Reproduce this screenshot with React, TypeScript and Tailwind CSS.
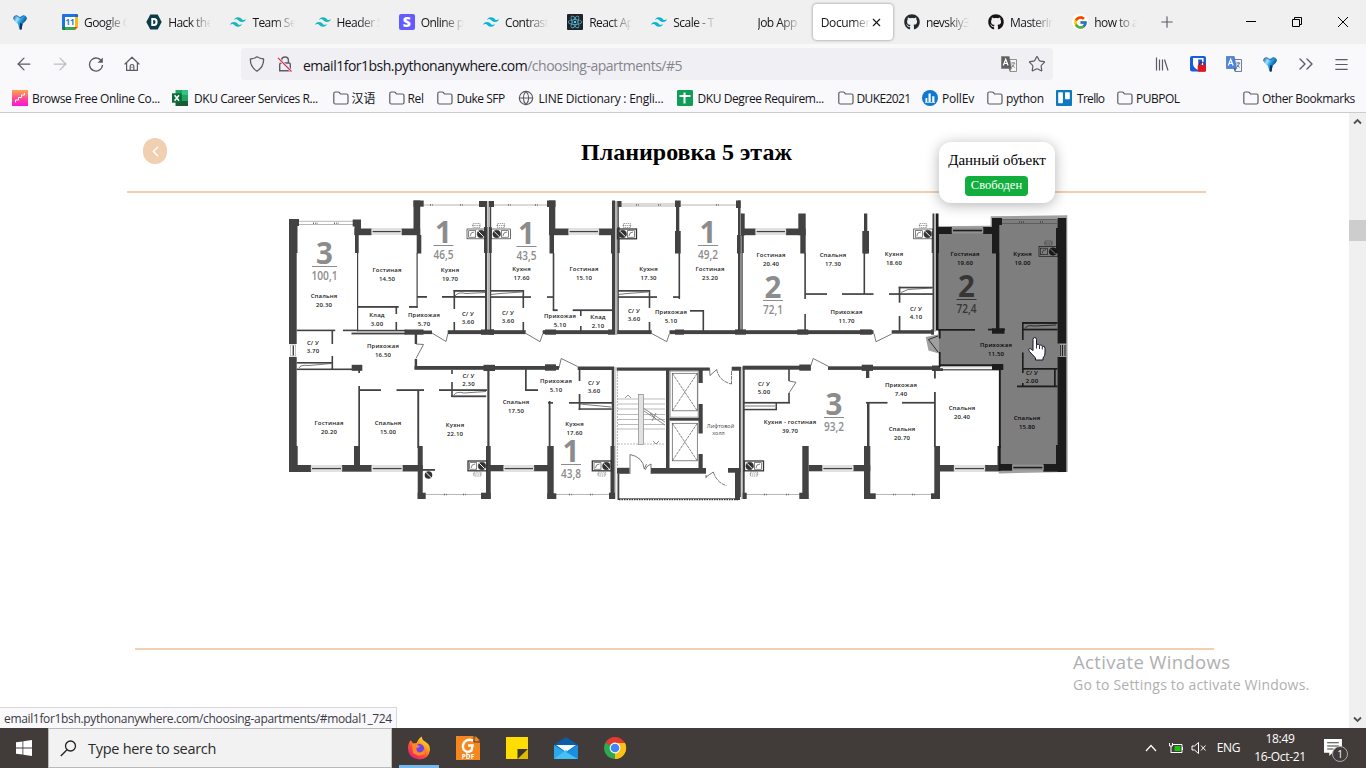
import React from "react";
import { SiTailwindcss, SiReact } from "react-icons/si";
import { FaGithub } from "react-icons/fa";
import { FcGoogle } from "react-icons/fc";
import { ArrowLeft, ArrowRight, Star, Menu, ChevronsRight, ChevronLeft, Globe, X, Plus } from "lucide-react";

type Box = [number, number, number, number];

const WALL = "#424242";

/* ---------- browser icons ---------- */

function Gem() {
  return (
    <svg viewBox="0 0 16 16" className="h-4 w-4">
      <defs>
        <linearGradient id="gem" x1="0" y1="0" x2="1" y2="0.6">
          <stop offset="0" stopColor="#0a3f80" />
          <stop offset="0.35" stopColor="#a5e4ff" />
          <stop offset="0.55" stopColor="#2ba4ea" />
          <stop offset="1" stopColor="#062f60" />
        </linearGradient>
      </defs>
      <path d="M1 4.500Q2 1 4.500 1.200L8 2.500 11.500 1.200Q14 1 15 4.500 14 7.500 10.500 10L9.500 15.500H7.500L6 10Q2 7.500 1 4.500Z" fill="url(#gem)" />
      <path d="M4.500 1.500 8 4 11.500 1.500" stroke="#0c5da8" strokeWidth="0.8" fill="none" />
      <path d="M8 9v6.500h1.500l1-5.500z" fill="#06335f" />
    </svg>
  );
}

function Calendar() {
  return (
    <svg viewBox="0 0 16 16" className="h-4 w-4">
      <path d="M0 1Q0 0 1 0H13V3H3V13H0Z" fill="#1a73e8" />
      <path d="M13 0h2q1 0 1 1v2h-3z" fill="#1967d2" />
      <path d="M13 3h3v10h-3z" fill="#fbbc04" />
      <path d="M3 13h10v3H3z" fill="#34a853" />
      <path d="M0 13h3v3H1q-1 0-1-1z" fill="#188038" />
      <path d="M13 13h3l-3 3z" fill="#ea4335" />
      <path d="M3 3h10v10H3z" fill="#fff" />
      <text x="8" y="11" textAnchor="middle" fontSize="8" fontWeight="700" fontFamily="Open Sans, sans-serif" fill="#1a73e8">11</text>
    </svg>
  );
}

function HexD() {
  return (
    <svg viewBox="0 0 16 16" className="h-4 w-4">
      <path d="M4.300 .5h7.400L15.700 8l-4 7.500H4.300L.3 8z" fill="#0d3b4a" />
      <path d="M5.300 4H8q3.600.2 3.600 4T8 12H5.300zM7.200 6v4H8q1.500-.2 1.500-2T8 6z" fill="#fff" fillRule="evenodd" />
    </svg>
  );
}

function Stripe() {
  return <span className="flex h-4 w-4 items-center justify-center rounded-[2px] bg-[#635bff] font-['Open_Sans',sans-serif] text-[14px] leading-none font-extrabold text-white">S</span>;
}

function ReactLogo() {
  return (
    <span className="flex h-4 w-4 items-center justify-center rounded-[1px] bg-[#20232a]">
      <SiReact className="h-[14px] w-[14px] text-[#5cc5e0]" />
    </span>
  );
}

function GoogleG() {
  return (
    <span className="flex h-4 w-4 items-center justify-center rounded-full bg-white">
      <FcGoogle className="h-[15px] w-[15px]" />
    </span>
  );
}

function Reload() {
  return (
    <svg viewBox="0 0 16 16" className="h-4 w-4" fill="none" stroke="#5b5b66" strokeWidth="1.300">
      <path d="M14 6A6.500 6.500 0 1 0 14.500 9" />
      <path d="M14.800 1.500V6.700H9.600Z" fill="#5b5b66" stroke="none" />
    </svg>
  );
}

function Home() {
  return (
    <svg viewBox="0 0 16 16" className="h-4 w-4" fill="none" stroke="#5b5b66" strokeWidth="1.2" strokeLinejoin="round" strokeLinecap="round">
      <path d="M1 8 8 1.200 15 8M2.600 6.700V14.400H13.400V6.700M6.200 14.200V10Q6.200 8.500 8 8.500T9.800 10V14.200M8 11v.2" />
    </svg>
  );
}

function ShieldIcon() {
  return (
    <svg viewBox="0 0 16 16" className="h-4 w-4" fill="none" stroke="#5b5b66" strokeWidth="1.300" strokeLinejoin="round">
      <path d="M8 .8Q11 2.700 14.600 3 15 11 8 15.200 1 11 1.400 3 5 2.700 8 .8Z" />
    </svg>
  );
}

function LockOff() {
  return (
    <svg viewBox="0 0 16 16" className="h-4 w-4" fill="none" stroke="#5b5b66" strokeWidth="1.400">
      <path d="M4.600 7V4.500Q4.600 1 8 1T11.400 4.500V7M2.700 14.800V8.500Q2.700 7 4 7H12Q13.300 7 13.300 8.500V14.800Z" />
      <path d="M1 2 14.500 15.500" stroke="#f0f0f4" strokeWidth="2.500" />
      <path d="M1 1.800 14.500 15.500" stroke="#e22850" strokeWidth="1.200" />
    </svg>
  );
}

function Translate({ back, ink }: { back: string; ink: string }) {
  return (
    <svg viewBox="0 0 16 16" className="h-4 w-4">
      <path d="M7 3.500h8.500V15.500H9z" fill="#f4f4f4" stroke={ink} strokeWidth="0.8" />
      <path d="M10.200 7h4M12.200 6v1M13.400 7q-.4 3-3 4.500M10.800 8.500q1 2 3 3" stroke={ink} strokeWidth="0.8" fill="none" />
      <path d="M.4.5H8.200L10.500 12.500H.4z" fill={back} stroke={ink} strokeWidth="0.6" />
      <path d="M7.500 12.500h3L9 15.500z" fill={ink} />
      <path d="M2.300 9.500 4.700 3.200 7.100 9.500M3.200 7.500h3" stroke="#fff" strokeWidth="1.200" fill="none" />
    </svg>
  );
}

function Library() {
  return (
    <svg viewBox="0 0 16 16" className="h-4 w-4" stroke="#5b5b66" strokeWidth="1.200" fill="none">
      <path d="M2.500 1.500v13M5.500 3.500v11M8.500 3.500v11M10.500 3.500l3.500 11" />
    </svg>
  );
}

function Bitwarden() {
  return (
    <svg viewBox="0 0 16 16" className="h-4 w-4">
      <rect width="16" height="15.500" rx="2" fill="#175ddc" />
      <path d="M3 2h10.500v6q-.5 4-5.200 6Q3.500 12 3 8z" fill="#fff" />
      <path d="M8.200 3.500h3.800v4.500q-.5 2.500-3.800 4.200z" fill="#175ddc" />
      <path d="M9.500 9.500V8q.3-2 2.300-2t2.300 2v1.500" stroke="#901018" strokeWidth="1.200" fill="none" />
      <rect x="7.700" y="9" width="8.300" height="6.800" rx="1" fill="#e3161c" />
    </svg>
  );
}

function Folder() {
  return (
    <svg viewBox="0 0 16 16" className="h-4 w-4" fill="none" stroke="#5b5b66" strokeWidth="1.200" strokeLinejoin="round">
      <path d="M.8 12.500V3.500Q.8 2 2.300 2H5.200Q6 2 6.500 2.700L7.400 4H13.500Q15 4 15 5.500V12.500Q15 14 13.500 14H2.300Q.8 14 .8 12.500Z" />
    </svg>
  );
}

function Stairs() {
  return (
    <svg viewBox="0 0 16 16" className="h-4 w-4">
      <defs>
        <linearGradient id="st" x1="0" y1="0" x2="0" y2="1">
          <stop offset="0" stopColor="#ffa64d" />
          <stop offset="0.5" stopColor="#ff4f8b" />
          <stop offset="1" stopColor="#fb12e0" />
        </linearGradient>
      </defs>
      <path d="M0 0h16v16H0z" fill="url(#st)" />
      <path d="M3.500 12.500V10H6.500V7.500H9.500V5H12.500V3" stroke="#fff" strokeWidth="1" fill="none" />
    </svg>
  );
}

function Excel() {
  return (
    <svg viewBox="0 0 16 16" className="h-4 w-4">
      <path d="M3.500 0h6.500v5H3.500z" fill="#21a366" />
      <path d="M10 0h6v5h-6z" fill="#33c481" />
      <path d="M3.500 5h6.500v6H3.500z" fill="#107c41" />
      <path d="M10 5h6v6h-6z" fill="#21a366" />
      <path d="M3.500 11H16v5H3.500z" fill="#185c37" />
      <path d="M0 3.300h9.500v9.400H0z" fill="#0d6b38" />
      <path d="M2.600 5.200 7 10.800M7 5.200 2.600 10.800" stroke="#fff" strokeWidth="1.500" />
    </svg>
  );
}

function Sheets() {
  return (
    <svg viewBox="0 0 16 16" className="h-4 w-4">
      <rect width="16" height="16" rx="1.200" fill="#0f9d58" />
      <path d="M2.500 6H13.500M7.500 2.500V13.500" stroke="#fff" strokeWidth="2" />
    </svg>
  );
}

function PollEv() {
  return (
    <svg viewBox="0 0 16 16" className="h-4 w-4">
      <circle cx="8" cy="8" r="8" fill="#0f78d1" />
      <path d="M3.500 8h1.800v4H3.500zM6.500 3.500h2.200V12H6.500zM10.200 6.300h2.200V12h-2.200z" fill="#fff" />
      <path d="M3 12.500h10" stroke="#fff" strokeWidth="0.700" />
    </svg>
  );
}

function Trello() {
  return (
    <svg viewBox="0 0 16 16" className="h-4 w-4">
      <rect width="16" height="16" rx="1" fill="#0f79bf" />
      <rect x="2.200" y="2.200" width="4.700" height="11" rx="0.600" fill="#fff" />
      <rect x="9" y="2.200" width="4.800" height="7" rx="0.600" fill="#fff" />
    </svg>
  );
}

function GlobeIcon() {
  return <Globe className="h-4 w-4 text-[#5b5b66]" strokeWidth={1.7} />;
}

/* ---------- browser chrome ---------- */

const tabs: { label: string; icon?: React.ReactNode; active?: boolean }[] = [
  { label: "Google C", icon: <Calendar /> },
  { label: "Hack the", icon: <HexD /> },
  { label: "Team Se", icon: <SiTailwindcss className="h-4 w-4 text-[#17b8bd]" /> },
  { label: "Header S", icon: <SiTailwindcss className="h-4 w-4 text-[#17b8bd]" /> },
  { label: "Online p", icon: <Stripe /> },
  { label: "Contrast", icon: <SiTailwindcss className="h-4 w-4 text-[#06b6d4]" /> },
  { label: "React Ap", icon: <ReactLogo /> },
  { label: "Scale - T", icon: <SiTailwindcss className="h-4 w-4 text-[#06b6d4]" /> },
  { label: "Job App" },
  { label: "Document", active: true },
  { label: "nevskiy3", icon: <FaGithub className="h-4 w-4 text-[#24292e]" /> },
  { label: "Masterin", icon: <FaGithub className="h-4 w-4 text-[#191414]" /> },
  { label: "how to a", icon: <GoogleG /> },
];

function TabStrip() {
  return (
    <div className="flex h-11 items-center bg-[#f0f0f0] text-[12px] text-[#15141a]">
      <div className="flex w-[54px] shrink-0 pl-3">
        <Gem />
      </div>
      {tabs.map((t) =>
        t.active ? (
          <div key={t.label} className="flex h-full w-[84.200px] shrink-0 items-center">
            <div className="ml-px flex h-9 w-[80px] items-center justify-between rounded-[4px] bg-white pr-2.5 pl-2 shadow-[0_0_3px_rgba(0,0,0,0.45)]">
              <span className="w-[50px] overflow-hidden [mask-image:linear-gradient(to_right,#000_65%,transparent)] pt-0.5 tracking-[-0.350px] whitespace-nowrap">{t.label}</span>
              <X className="h-[13px] w-[13px] shrink-0" strokeWidth={2} />
            </div>
          </div>
        ) : (
          <div key={t.label} className="flex w-[84.200px] shrink-0 items-center pl-2">
            <span className="mr-1.5 h-4 w-4 shrink-0">{t.icon}</span>
            <span className="w-[43px] overflow-hidden [mask-image:linear-gradient(to_right,#000_50%,transparent_100%)] pt-0.5 tracking-[-0.550px] whitespace-nowrap">{t.label}</span>
          </div>
        ),
      )}
      <Plus className="ml-[10px] h-[18px] w-[18px] text-[#5b5b66]" strokeWidth={1.500} />
      <div className="ml-auto flex items-center text-black">
        <svg viewBox="0 0 10 10" className="mr-9 h-2.5 w-2.5">
          <path d="M0 4.500h10" stroke="currentColor" />
        </svg>
        <svg viewBox="0 0 10 10" className="mr-9 h-2.5 w-2.5" fill="none" stroke="currentColor">
          <path d="M.5 2.500h7v7h-7zM2.500 2.500v-2h7v7h-2" />
        </svg>
        <svg viewBox="0 0 10 10" className="mr-[18px] h-2.5 w-2.5" stroke="currentColor">
          <path d="M0 0l10 10M10 0L0 10" />
        </svg>
      </div>
    </div>
  );
}

function NavBar() {
  return (
    <div className="flex h-10 items-center bg-[#f9f9fb] text-[#5b5b66]">
      <ArrowLeft className="ml-[14px] h-5 w-5" strokeWidth={1.500} />
      <ArrowRight className="ml-4 h-5 w-5 text-[#bcbcc3]" strokeWidth={1.500} />
      <span className="ml-[18px]">
        <Reload />
      </span>
      <span className="ml-5">
        <Home />
      </span>
      <div className="ml-[101px] flex h-8 w-[812px] items-center rounded-[4px] bg-[#f0f0f4] pl-2">
        <ShieldIcon />
        <span className="ml-3">
          <LockOff />
        </span>
        <span className="ml-2.5 pt-0.5 text-[14px] tracking-[-0.500px] whitespace-nowrap text-[#15141a]">
          email1for1bsh.pythonanywhere.com<span className="text-[#85858c]">/choosing-apartments/#5</span>
        </span>
        <span className="mr-[11px] ml-auto">
          <Translate back="#606060" ink="#777" />
        </span>
        <Star className="mr-[7px] h-[18px] w-[18px]" strokeWidth={1.600} />
      </div>
      <div className="ml-[101px] flex items-center gap-5">
        <Library />
        <Bitwarden />
        <Translate back="#4a86e8" ink="#47628f" />
        <Gem />
        <ChevronsRight className="-mx-1 h-6 w-6" strokeWidth={1.400} />
        <Menu className="-ml-px h-[17px] w-[17px]" strokeWidth={1.700} />
      </div>
    </div>
  );
}

function Bookmark({ icon, label, className }: { icon: React.ReactNode; label: string; className: string }) {
  return (
    <div className={"flex shrink-0 items-center whitespace-nowrap " + className}>
      <span className="h-4 w-4 shrink-0">{icon}</span>
      <span className="pt-0.5">{label}</span>
    </div>
  );
}

function Bookmarks() {
  return (
    <div className="flex h-[29px] items-center border-b border-[#cccccc] bg-[#f9f9fb] pl-3 font-['Open_Sans','Noto_Sans_CJK_SC',sans-serif] text-[12px] text-[#15141a]">
      <Bookmark className="w-[160px] gap-1 tracking-[-0.370px]" icon={<Stairs />} label="Browse Free Online Co..." />
      <Bookmark className="w-[160.500px] gap-[6px] tracking-[-0.430px]" icon={<Excel />} label="DKU Career Services R..." />
      <Bookmark className="w-[56px] gap-[3px]" icon={<Folder />} label="汉语" />
      <Bookmark className="w-[48px] gap-[3px] tracking-[-0.300px]" icon={<Folder />} label="Rel" />
      <Bookmark className="w-[81px] gap-[4px] tracking-[-0.500px]" icon={<Folder />} label="Duke SFP" />
      <Bookmark className="w-[159px] gap-[5px] tracking-[-0.230px]" icon={<GlobeIcon />} label="LINE Dictionary : Engli..." />
      <Bookmark className="w-[161px] gap-[5px] tracking-[-0.420px]" icon={<Sheets />} label="DKU Degree Requirem..." />
      <Bookmark className="w-[84.500px] gap-[3px] tracking-[-0.600px]" icon={<Folder />} label="DUKE2021" />
      <Bookmark className="w-[65px] gap-[4px] tracking-[-0.200px]" icon={<PollEv />} label="PollEv" />
      <Bookmark className="w-[69px] gap-[3px] tracking-[-0.300px]" icon={<Folder />} label="python" />
      <Bookmark className="w-[61px] gap-[5px] tracking-[-0.700px]" icon={<Trello />} label="Trello" />
      <Bookmark className="w-[70px] gap-[3px] tracking-[-0.500px]" icon={<Folder />} label="PUBPOL" />
      <Bookmark className="mr-3 ml-auto w-[111px] gap-[3px] tracking-[-0.400px]" icon={<Folder />} label="Other Bookmarks" />
    </div>
  );
}

/* ---------- floor plan ---------- */

const walls: Box[] = [
  // left flat, upper
  [289, 219, 7.7, 125], [289, 219, 10, 7], [289, 357, 7.7, 115], [296, 226, 1.500, 27], [352.7, 219.500, 8.300, 7], [354.500, 226, 6.500, 9], [355, 235, 3.700, 18],
  [357, 253, 1.200, 77], [354.500, 228.500, 17, 6.700], [401.700, 228.500, 18.500, 6.700], [413.500, 200.500, 6.700, 34.500], [416.700, 235, 4.600, 18.500],
  [413.500, 200.500, 10.200, 6.200], [416.500, 253, 1.200, 55], [479, 201, 8, 6], [485, 201, 2, 130], [484, 227, 3.500, 26], [489.700, 201, 1.500, 130],
  [489, 227, 2.700, 26], [357.700, 306, 41, 1.800], [409, 306, 8.500, 1.800], [395.500, 306, 1.600, 8], [395.500, 322, 1.600, 9], [417, 296, 10, 1.800],
  [442, 296, 43, 1.800], [453.500, 290, 32, 1.800], [453.500, 290, 1.600, 19], [453.500, 322, 1.600, 9], [357, 329.800, 50, 1.600], [351.500, 332.600, 55, 1.800],
  [404.500, 329.500, 19, 5.200], [415, 330.500, 17, 3.600], [447.700, 330.200, 78, 3.900], [481, 329.500, 13, 5.300], [296.700, 329.600, 38.500, 1.600],
  [343, 329.600, 15, 1.600], [331.500, 330, 1.600, 14], [331.500, 356, 1.600, 13], [296.700, 362, 36, 1.600], [296.700, 368.500, 65, 1.600],
  [351.700, 364.800, 10.600, 6], [414.700, 333, 2.400, 11], [414.700, 359, 2.400, 10], [414.500, 366, 144.500, 3.800], [483.500, 364.800, 11.500, 6.200],
  // left flat, lower
  [358.300, 369, 1.700, 4], [358.300, 386, 1.700, 80], [359, 389.200, 22, 1.800], [396.500, 389.200, 27.500, 1.800], [439, 389.200, 48, 1.800],
  [451.200, 370, 1.600, 4], [451.200, 382, 1.600, 15], [451.200, 395.400, 35, 1.800], [487.300, 370, 2.200, 78], [417.300, 390, 1.900, 58],
  [289, 465, 22, 7], [289, 446, 8.700, 20], [342, 465, 29.700, 6.700], [354, 446, 6, 20], [402.700, 465, 20, 6.500], [417.700, 446, 5, 53],
  [417.700, 492.700, 8, 6.300], [481, 492.700, 9.700, 6.300], [486, 446, 4.700, 53], [422, 469, 13, 1.800],
  // two one-room flats, upper
  [489, 201, 5, 6], [547, 200.500, 8.500, 6.500], [549, 200.500, 6.300, 34.500], [549.500, 235, 4.500, 18.500], [549, 228.500, 19.500, 6.700],
  [599, 228.500, 14.500, 6.700], [612, 200.500, 3, 130], [611, 235, 3.500, 18.500], [617.300, 201, 1.500, 130], [617.300, 227, 2.400, 26], [617.500, 201, 4, 6],
  [552.700, 253, 1.600, 57], [552.700, 309.300, 5, 1.800], [572.700, 309.300, 40, 1.800], [580, 310, 1.600, 6], [580, 326, 1.600, 5],
  [491, 290, 33, 1.700], [522.500, 290, 1.600, 18], [522.500, 322, 1.600, 9], [491, 296.200, 40, 1.700], [547, 296.200, 6, 1.700],
  [542.700, 330.200, 109, 3.900], [545, 329.500, 11, 5.200], [608, 329.500, 7, 5.200], [490, 329.500, 4, 5.300],
  [618, 290, 32, 1.700], [648.700, 290, 1.600, 18], [648.700, 322, 1.600, 9], [618, 296.200, 39, 1.700], [673, 296.200, 7, 1.700],
  [675, 200.500, 5.700, 6.500], [676, 206, 3.300, 47], [675, 231, 5.700, 22.500], [678.500, 253, 1.600, 46], [669.500, 330.200, 204, 3.900],
  [690, 310, 14, 1.700], [702.500, 310, 1.600, 21], [736, 200.500, 4.700, 7.500], [738, 200.500, 2.500, 130], [737, 235, 3.500, 18.500], [675, 329.500, 9, 5.200],
  // two-room flat 72,1
  [741, 213.500, 3.700, 22], [741.500, 235, 2.300, 18], [741.500, 253, 1.200, 78], [741, 228.500, 14.500, 6.700], [786, 228.500, 19.700, 6.700], [798.300, 213.500, 7.400, 21.700],
  [800.300, 235, 5.400, 18.500], [804.300, 253, 1.600, 46], [804.300, 314, 1.600, 16], [805, 293.200, 22, 1.700], [842, 293.200, 31.500, 1.700],
  [889, 293.200, 44, 1.700], [864, 213.500, 3.300, 40], [862.300, 231, 6.700, 22.500], [863.500, 253, 1.600, 41], [898.700, 286.700, 1.700, 16],
  [898.700, 316, 1.700, 15], [898.700, 286.700, 34, 1.700], [735, 329.400, 11, 5.300], [797.300, 329.400, 11, 5.300], [860, 329.400, 11.700, 5.300],
  [891.700, 330.200, 41.500, 3.500], [931, 329.500, 3, 5.200], [932.500, 213.500, 1.500, 117], [931.700, 231, 2.300, 22],
  // one-room flat 43,8
  [545, 364.300, 11, 6.400], [577.700, 366.500, 36.500, 3.500], [525, 369, 1.700, 22], [525, 389.200, 13, 1.800], [548.700, 401, 1.800, 46],
  [548, 402, 5, 1.700], [569, 402, 43, 1.700], [578.700, 368, 1.700, 13], [578.700, 394, 1.700, 16], [578.700, 408.300, 33, 1.500], [611.700, 369, 2.400, 130],
  [486.700, 465, 17, 6.300], [534, 465, 19, 6.300], [547.300, 446, 6.400, 53], [547.300, 493.300, 9, 5.700], [609, 492.700, 6, 6.300], [610.500, 446, 4, 53],
  // stairwell and lift lobby
  [616.700, 367.500, 93, 3.200], [666, 370, 3.500, 99], [669.500, 417.700, 31, 3], [617, 467.800, 12.500, 6], [651, 468, 55, 5.700], [617.500, 474, 1.800, 26],
  [698.500, 369, 4.200, 14], [698.500, 404, 4.200, 29.500], [698.500, 454, 4.200, 15], [731.700, 366.700, 9, 4], [739, 367, 1.800, 130],
  [728, 468, 12.500, 4.700], [735, 472, 5, 28], [618, 498.300, 120, 0.900],
  // three-room flat 93,2
  [742.700, 365.700, 68, 4], [742.700, 367, 2, 132], [799.300, 364.500, 11.500, 6.200], [828, 366.300, 107, 3.600], [861.700, 364.700, 11.300, 6.200],
  [788.200, 369, 1.600, 12], [788.200, 393, 1.600, 10], [744, 401.900, 46, 1.700], [744, 408.800, 33, 1.500], [775.500, 403, 1.500, 7],
  [802.300, 446, 6.400, 53], [799.300, 492.700, 9, 6.300], [808.700, 465, 13.500, 6.300], [853.300, 465, 17, 6.300], [864, 446, 6.300, 53],
  [864, 493.300, 11.700, 5.700], [742.700, 492.700, 4, 6.300], [866, 369, 3.300, 9], [866, 401.900, 21.500, 1.700], [902, 401.900, 32.500, 1.700],
  [867, 402, 2.500, 45], [932, 365.500, 11, 5.500], [934, 370, 1.800, 8.500], [934, 392, 1.800, 55], [934.300, 446, 5.700, 53], [931, 493.300, 9, 5.700],
  [940, 465, 14, 6.500], [985, 465, 14, 6.500], [942, 369.200, 57, 1.200], [997.500, 446, 2, 20],
];

const darkWalls: Box[] = [
  [936, 213.500, 2.500, 117], [937, 231, 2, 22], [936, 227, 16, 7], [983, 227, 14, 7], [992, 218, 10, 7], [992, 218, 7.300, 35.500], [996, 253, 3.400, 77],
  [1057.600, 218, 8.600, 125.500], [1057.600, 357, 8.600, 115], [1056, 228, 2, 25], [938, 329, 37, 1.700], [992, 328.300, 12.500, 5.400], [1001, 328.700, 4, 1.700], [988, 328.700, 5, 1.700],
  [938.800, 330, 1.800, 8.500], [938.800, 352, 1.800, 15], [1022, 322, 35.500, 1.900], [1022, 323, 1.600, 17], [1022, 328.700, 35.500, 1.700],
  [1022, 352.500, 1.600, 17.500], [940, 364.300, 54, 1.700], [992, 364, 11.300, 6], [1022, 368, 35.500, 1.700], [1017, 385.500, 40.500, 1.800],
  [1054, 369, 1.700, 17], [1022, 369, 1.600, 4], [1022, 383, 1.600, 3], [999, 370, 1.800, 78], [998.300, 446, 2.400, 25], [999, 464, 13.300, 6.700],
  [1043.300, 464, 15, 7.700], [1056, 445, 2, 20],
];

const windows: Box[] = [
  [371.500, 229, 30.200, 5], [568.500, 229, 30.500, 5], [755.500, 229, 30.500, 5], [311, 466, 31, 5], [371.700, 466, 31, 5],
  [503.500, 466, 30.500, 5], [822.300, 466, 31, 5], [954, 466, 31, 5],
];

const darkWindows: Box[] = [[952, 228, 31, 5], [1012.300, 465, 31, 5]];

const labels: [number, number, string, string][] = [
  [324, 296, "Спальня", "20.30"], [387, 270, "Гостиная", "14.50"], [450, 269.500, "Кухня", "19.70"], [377, 315, "Клад", "3.00"],
  [424, 314.500, "Прихожая", "5.70"], [468, 314, "С/ У", "3.60"], [313, 343, "С/ У", "3.70"], [383, 346, "Прихожая", "16.50"],
  [521.500, 269, "Кухня", "17.60"], [584, 268.500, "Гостиная", "15.10"], [508, 313, "С/ У", "3.60"], [560, 315.500, "Прихожая", "5.10"],
  [598, 317, "Клад", "2.10"], [648.500, 269, "Кухня", "17.30"], [634, 310.500, "С/ У", "3.60"], [671, 311.500, "Прихожая", "5.10"],
  [710, 268.500, "Гостиная", "23.20"], [771, 254.500, "Гостиная", "20.40"], [833, 254.500, "Спальня", "17.30"], [894, 253.500, "Кухня", "18.60"],
  [846.500, 311.500, "Прихожая", "11.70"], [916, 308.500, "С/ У", "4.10"], [468.500, 375.500, "С/ У", "2.30"], [329, 423, "Гостиная", "20.20"],
  [388, 422.500, "Спальня", "15.00"], [455, 424.500, "Кухня", "22.10"], [516, 401.500, "Спальня", "17.50"], [556, 381, "Прихожая", "5.10"],
  [594, 382.500, "С/ У", "3.60"], [574.500, 424, "Кухня", "17.60"], [764, 384, "С/ У", "5.00"], [790, 421.500, "Кухня - гостиная", "39.70"],
  [901, 384.500, "Прихожая", "7.40"], [902, 429, "Спальня", "20.70"], [962, 408, "Спальня", "20.40"],
];

const darkLabels: [number, number, string, string][] = [
  [965, 253.500, "Гостиная", "19.60"], [1022.500, 254, "Кухня", "19.00"], [996, 344.500, "Прихожая", "11.50"], [1032, 373, "С/ У", "2.00"], [1027, 417.500, "Спальня", "15.80"],
];

const flats: [number, number, string, string][] = [
  [324.500, 264.500, "3", "100,1"], [443.500, 243.500, "1", "46,5"], [526.500, 244.500, "1", "43,5"], [708, 243.500, "1", "49,2"],
  [773, 298.500, "2", "72,1"], [571, 462.500, "1", "43,8"], [834, 415.500, "3", "93,2"],
];

function Boxes({ items, fill }: { items: Box[]; fill: string }) {
  return (
    <g fill={fill}>
      {items.map(([x, y, w, h], i) => (
        <rect key={i} x={x} y={y} width={w} height={h} />
      ))}
    </g>
  );
}

function Casements({ items, fill, ink }: { items: Box[]; fill: string; ink: string }) {
  return (
    <g>
      {items.map(([x, y, w, h], i) => (
        <g key={i}>
          <rect x={x} y={y} width={w} height={h} fill={fill} stroke="#999" strokeWidth="0.600" />
          <rect x={x + 1} y={y + 1.800} width={w - 2} height="1.500" fill={ink} />
        </g>
      ))}
    </g>
  );
}

function RoomLabels({ items, fill }: { items: [number, number, string, string][]; fill: string }) {
  return (
    <g fill={fill} textAnchor="middle" fontFamily="Open Sans, sans-serif" fontSize="6" fontWeight="600" letterSpacing="0.150">
      {items.map(([x, y, name, area], i) => (
        <g key={i}>
          <text x={x} y={y + 2.200}>{name}</text>
          <text x={x} y={y + (name === "С/ У" ? 10.300 : 11)}>{area}</text>
        </g>
      ))}
    </g>
  );
}

function FlatMark({ x, y, rooms, area, fill }: { x: number; y: number; rooms: string; area: string; fill: string }) {
  const w = area.length > 4 ? 26 : 20;
  return (
    <g fill={fill} textAnchor="middle" fontFamily="Open Sans, sans-serif">
      <text x={x} y={y - 0.500} fontSize="29.500" fontWeight="700">{rooms}</text>
      <rect x={x - (w === 26 ? 12.500 : 10)} y={y + 1.500} width={w === 26 ? 25 : 20} height="1" />
      <text x={x} y={y + 15} fontSize="12.500" fontWeight="600" textLength={w} lengthAdjust="spacingAndGlyphs">{area}</text>
    </g>
  );
}

function Stove({ x, y, flip, below, heavy, dark }: { x: number; y: number; flip?: boolean; below?: boolean; heavy?: boolean; dark?: boolean }) {
  const cx = flip ? x + 5.200 : x + 14;
  const sx = flip ? x + 10 : x + 1.700;
  const ink = dark ? "#171717" : "#333";
  return (
    <g fill="none" stroke={ink} strokeWidth="0.600">
      <rect x={x} y={y} width="19" height="9.800" strokeWidth={heavy ? 1.300 : 0.700} />
      <rect x={sx} y={y + 1.700} width="7" height="6.500" />
      <path d={`M${sx + 1.500} ${y + 7}q0-4 4-4`} />
      <circle cx={cx} cy={y + 5} r="3.800" fill={ink} />
      <path d={`M${cx - 2.700} ${y + 2.300}l5.400 5.400`} stroke={dark ? "#808080" : "#fff"} strokeWidth="1" />
      <g strokeDasharray="1.500 0.700" stroke={dark ? "#333" : "#666"}>
        <rect x={x + 6} y={below ? y + 11 : y - 5.500} width="7" height="4" />
        <path d={`M${x + 5} ${below ? y + 13 : y - 3.500}h9`} />
      </g>
    </g>
  );
}

function FloorPlan() {
  const steps = [399, 404, 409, 414.500, 419.500, 424.500, 429];
  return (
    <svg viewBox="280 196 796 308" className="h-[308px] w-[796px]">
      <g fill="none" stroke="#9a9a9a" strokeWidth="0.700">
        <path d="M299 221.300H353M299 224.500H353M423.700 205H479M494 205H547M621 204H675M621 206H675M681 205H736" />
        <path d="M425.700 494.500H481M556 494.500H609M746 494.500H800M875 494.500H931" />
        <g stroke="#666" strokeWidth="1.600" strokeDasharray="1 1.300">
          <path d="M313 223.200h5M334 223.200h5M430 205h3M460 205h3M508 205h3M535 205h3M636 205h3M658 205h3M716 205h3M444 494.500h3M463 494.500h3M569 494.500h3M590 494.500h3M764 494.500h3M786 494.500h3M893 494.500h3M912 494.500h3" />
        </g>
      </g>
      <g fill="#b4b4b4">
        <rect x="487.300" y="201" width="2" height="132" />
        <rect x="740.500" y="213" width="1.200" height="118" />
        <rect x="740.800" y="367" width="1.800" height="132" fill="#cfcfcf" />
        <rect x="934" y="213.500" width="2" height="118" />
        <rect x="614.300" y="367" width="2" height="132" fill="#cfcfcf" />
      </g>
      <Boxes items={walls} fill={WALL} />
      <rect x="615" y="201" width="2.200" height="134" fill="#b4b4b4" />
      <Casements items={windows} fill="#fff" ink={WALL} />
      <rect x="290.700" y="345" width="5" height="11" fill="#fff" stroke="#999" strokeWidth="0.600" />
      <rect x="292.600" y="345.500" width="1.400" height="10" fill={WALL} />

      <g fill="none" stroke="#555" strokeWidth="0.800">
        <path d="M432 333 446 341.500 447.800 334M526 333.500 540 341.700 542.700 334M651.700 333.500 666.700 341.700 669.300 334M874 333.500 876 341.700 891.700 334" />
        <path d="M416 344 423.500 344.500 416 358.500M559 368 561.200 358.500 577.700 366.500M810 368 813.200 358.500 828.300 366.300M789 381 796 382.300 789 393" />
        <path d="M630 474V454.500Q643 457 644.300 469M644.300 469 646.500 464 M651 474V464Q647 465 645 470" />
        <path d="M709.500 368 710 375.500 716.700 369.500M706 477 713.300 472" />
        <path d="M716.700 369.500Q719 381 731.500 384M731.500 371V384M713.300 472Q717 483 726.500 485.500M706 475V478" strokeDasharray="4 0.800" />
        <path d="M299 368 Q300 364.500 309 365.500L331 363.500M455 296Q458 291.500 466 293.500L485 292.500M491 294.500 500 293.500 522 292M618 294.500 627 293.500 648 292M901 292.500 908 289.500 932 288M454 395Q456 391 464 393L486 391.500M580 404 611 407M745 406H775" />
      </g>

      <g stroke="#aaa" strokeWidth="0.800" fill="none">
        {steps.map((y) => (
          <path key={y} d={`M618 ${y}H638.500M643.500 ${y}H665`} />
        ))}
        <path d="M618 444H638M644 444H665M617.500 371V467" strokeDasharray="2 1" />
        <path d="M644 411 665 425M643 408 665 422M650 413l6 6M656 413l-4 8" stroke="#777" />
        <path d="M625 398l3-3 3 3M653 441l3 3 3-3" stroke="#777" />
      </g>
      <rect x="638.500" y="394.500" width="5" height="50" fill="#e2e2e2" stroke="#888" strokeWidth="0.700" />
      <g stroke="#555" strokeWidth="0.700" fill="none">
        <rect x="670.500" y="371.500" width="27.500" height="45.500" stroke="#888" strokeWidth="0.500" />
        <rect x="672.300" y="373.300" width="25" height="37.500" />
        <path d="M672.300 373.300 697.300 410.800M697.300 373.300 672.300 410.800" strokeDasharray="3 0.800" />
        <rect x="672.300" y="423.300" width="25" height="37.500" />
        <path d="M672.300 423.300 697.300 460.800M697.300 423.300 672.300 460.800" strokeDasharray="3 0.800" />
      </g>
      <path d="M619 499.700H738" stroke="#333" strokeWidth="1.200" strokeDasharray="1.500 1" />

      <Stove x={467} y={229} />
      <Stove x={491.500} y={229} flip />
      <Stove x={617.500} y={229} flip heavy />
      <Stove x={913.700} y={229} />
      <Stove x={468} y={461} below heavy />
      <Stove x={592.300} y={461} below heavy />
      <Stove x={744.500} y={461} flip below heavy />
      <circle cx="428.500" cy="475" r="3.800" fill="#333" />
      <path d="M425 471.500l7 7M423 479.500h4" stroke="#fff" strokeWidth="1" />

      {/* highlighted flat */}
      <path d="M936 226.300 990.700 225.700V216.200L1067.300 215.300 1067.700 472 998.700 473.500V367H939V353.500L928.500 350.500 925.700 337 938 334.500Z" fill="#a0a0a0" />
      <path d="M937 230H992V220H1060V468H999.500V366H939V330H937Z" fill="#7e7e7e" />
      <path d="M940 367.500H998" stroke="#e8e8e8" strokeWidth="1.300" />
      <path d="M1002 219.500H1057M1002 223.500H1057" stroke="#555" strokeWidth="0.800" />
      <path d="M1019 222h5M1040 222h4" stroke="#444" strokeWidth="1.600" strokeDasharray="1 1" />
      <Boxes items={darkWalls} fill="#1c1c1c" />
      <Casements items={darkWindows} fill="#8b8f8b" ink="#1c1c1c" />
      <rect x="1059" y="345" width="7.500" height="11" fill="#999" />
      <path d="M1060.300 345V356M1062.500 345V356M1065 345V356" stroke="#222" strokeWidth="1" />
      <path d="M938 336 928.500 339.500 938 352M1025 328.500Q1027 324.500 1034 326L1056 325" stroke="#222" strokeWidth="0.900" fill="none" />
      <Stove x={1039} y={246.500} dark />

      <RoomLabels items={labels} fill="#222" />
      <RoomLabels items={darkLabels} fill="#080808" />
      <g fill="#444" fontFamily="Open Sans, sans-serif" fontSize="5.400" textAnchor="middle" letterSpacing="0.100">
        <text x="720.500" y="427.700">Лифтовой</text>
        <text x="718.500" y="434.700">холл</text>
      </g>
      {flats.map(([x, y, rooms, area]) => (
        <FlatMark key={area} x={x} y={y} rooms={rooms} area={area} fill="#8c8c8c" />
      ))}
      <FlatMark x={966.500} y={297.500} rooms="2" area="72,4" fill="#363636" />

      {/* pointer */}
      <path
        d="M1033 339.500Q1033 337.500 1034.700 337.500T1036.500 339.500V344.500Q1038.500 343.500 1039.500 345.200 1041.300 344.200 1042.300 346 1045 345.500 1045 348.500V353Q1045 356 1043 358V360H1035.500V358L1029.500 351.500Q1028 349.500 1029.200 348.700 1030.500 348 1033 350.500Z"
        fill="#fff"
        stroke="#14142a"
        strokeWidth="1"
      />
      <path d="M1036.500 344.500v4M1039.500 345.500v3.500M1042.300 346v3.500" stroke="#14142a" strokeWidth="0.900" />
    </svg>
  );
}

/* ---------- page ---------- */

function Page() {
  return (
    <div className="relative flex h-[615px] bg-white">
      <main className="flex w-[1349px] flex-col">
        <div className="flex h-[78px] pt-[25px]">
          <button className="ml-[143px] flex h-[26px] w-6 items-center justify-center rounded-full bg-[#f1cfb1] text-white">
            <ChevronLeft className="h-[17px] w-[17px]" strokeWidth={2.200} />
          </button>
          <h1 className="ml-[414px] font-['Liberation_Serif',serif] text-[24px] leading-[28px] font-bold text-black">Планировка 5 этаж</h1>
        </div>
        <div className="ml-[127px] h-0.5 w-[1079px] bg-[#f1cfb1]" />
        <div className="mt-[3px] ml-[280px] h-[308px]">
          <FloorPlan />
        </div>
        <div className="mt-[144px] ml-[135px] h-0.5 w-[1079px] bg-[#f1cfb1]" />
      </main>
      <div className="flex w-[17px] flex-col items-center bg-[#f0f0f0]">
        <svg viewBox="0 0 17 17" className="h-[17px] w-[17px]" fill="none" stroke="#505050" strokeWidth="1.800">
          <path d="M5 10.500 8.500 7 12 10.500" />
        </svg>
        <div className="mt-[90px] h-[21px] w-[17px] bg-[#cdcdcd]" />
        <svg viewBox="0 0 17 17" className="mt-auto h-[17px] w-[17px]" fill="none" stroke="#505050" strokeWidth="1.800">
          <path d="M5 6.500 8.500 10 12 6.500" />
        </svg>
      </div>

      <div className="absolute top-[29px] left-[939px] flex h-[61px] w-[116px] flex-col items-center rounded-[12px] bg-white pt-[9px] font-['Liberation_Serif',serif] shadow-[0_2px_14px_rgba(0,0,0,0.3)]">
        <span className="text-[15px] leading-[18px] whitespace-nowrap text-black">Данный объект</span>
        <span className="mt-[7px] mr-px flex h-5 w-[63px] items-center justify-center rounded-[4px] bg-[#12ae3d] pb-px text-[12.500px] leading-none text-white">Свободен</span>
      </div>
      <div className="absolute top-[537px] left-[1073px] whitespace-nowrap text-[#b0b0b0]">
        <div className="text-[18.500px] leading-[24px] tracking-[0.350px]">Activate Windows</div>
        <div className="text-[14px] leading-[22px] tracking-[0.200px]">Go to Settings to activate Windows.</div>
      </div>
      <div className="absolute bottom-0 left-0 flex h-[21px] w-[397px] items-center border-t border-r border-[#d8d8dc] bg-[#f9f9fb] pt-0.5 pl-1 text-[12px] tracking-[-0.340px] whitespace-nowrap text-[#3a3944]">
        email1for1bsh.pythonanywhere.com/choosing-apartments/#modal1_724
      </div>
    </div>
  );
}

/* ---------- taskbar ---------- */

function FirefoxLogo() {
  return (
    <svg viewBox="0 0 24 24" className="h-6 w-6">
      <defs>
        <linearGradient id="ff" x1="0.900" y1="0" x2="0.200" y2="1">
          <stop offset="0" stopColor="#fff04f" />
          <stop offset="0.350" stopColor="#ffa51f" />
          <stop offset="0.650" stopColor="#ff4a3d" />
          <stop offset="1" stopColor="#e3168a" />
        </linearGradient>
      </defs>
      <path d="M2 7Q3 4 4 4.500L6 7.500 9.500 7Q11 3 14.500.5 15 4 18 5.500L20 7Q23 9 23 14 22 23 12 23.500 1.500 22.500 1 13 1 9 2 7Z" fill="url(#ff)" />
      <circle cx="12" cy="13" r="5.300" fill="#7542e5" />
      <path d="M5 7.500 10 8 12.500 10.500 9.500 12Q9 15 12 16.500 16 16.500 17 13L18 18 12 20 6 17Z" fill="#ff8a1e" />
      <path d="M10 10.500h3l-2.500 2z" fill="#9b7bff" />
    </svg>
  );
}

function FoxitLogo() {
  return (
    <svg viewBox="0 0 24 24" className="h-6 w-6">
      <path d="M0 0H18L24 6V24H0Z" fill="#f6871f" />
      <path d="M18 0V6H24" fill="none" stroke="#413c39" strokeWidth="1" />
      <path d="M19.500 0 24 4.500H19.500Z" fill="#f6871f" />
      <path d="M17 4.500Q11.500 2.500 8.500 6 5.500 10.500 8 14 11.500 17.500 15.500 14.500L16.500 9.500H12M15.500 14.500 10 17" stroke="#fff" strokeWidth="2.400" fill="none" />
      <text x="12" y="23" textAnchor="middle" fontSize="6.500" fontWeight="700" fontFamily="Open Sans, sans-serif" fill="#fff">PDF</text>
    </svg>
  );
}

function NotesLogo() {
  return (
    <svg viewBox="0 0 22 22" className="h-[22px] w-[22px]">
      <path d="M0 0H22V12L12 22H0Z" fill="#ffdd00" />
      <path d="M11.500 12H22L11.500 22Z" fill="#3a3631" />
      <path d="M22 12v10H12z" fill="#e3b900" />
    </svg>
  );
}

function MailLogo() {
  return (
    <svg viewBox="0 0 24 22" className="h-[22px] w-6">
      <path d="M0 8 12 0 24 8V14H0Z" fill="#0a5ea8" />
      <path d="M2 8H22L12 15Z" fill="#f4f8fc" />
      <path d="M0 8V22H24V8L12 15.500Z" fill="#2aa9ea" />
      <path d="M0 22 12 13 24 22Z" fill="#45c1f5" />
      <path d="M24 8V22L12 15Z" fill="#1b8fdd" />
    </svg>
  );
}

function ChromeLogo() {
  return (
    <svg viewBox="0 0 24 24" className="h-6 w-6">
      <path d="M12 12 2.500 6.500A11 11 0 0 1 21.500 6.500Z" fill="#e33b2e" />
      <path d="M12 12 21.500 6.500A11 11 0 0 1 12 23Z" fill="#fbc116" />
      <path d="M12 12 12 23A11 11 0 0 1 2.500 6.500Z" fill="#2da94f" />
      <path d="M12 7H22A11 11 0 0 1 12 23L16.500 14Z" fill="#fbc116" />
      <circle cx="12" cy="12" r="5.400" fill="#fff" />
      <circle cx="12" cy="12" r="4.300" fill="#4286f5" />
    </svg>
  );
}

function Taskbar() {
  return (
    <div className="flex h-10 items-center bg-[#413c39] text-white">
      <div className="flex w-12 justify-center">
        <svg viewBox="0 0 16 16" className="h-4 w-4" fill="#fff">
          <path d="M0 2.300 6.500 1.400V7.600H0ZM7.300 1.300 16 0V7.600H7.300ZM0 8.400H6.500V14.600L0 13.700ZM7.300 8.400H16V16L7.300 14.700Z" />
        </svg>
      </div>
      <div className="flex h-10 w-[344px] items-center border border-[#b9b9b9] bg-[#f2f2f2] pl-[11px] text-[#2b2b2b]">
        <svg viewBox="0 0 17 17" className="h-[17px] w-[17px]" fill="none" stroke="#222" strokeWidth="1.300">
          <circle cx="10.500" cy="6" r="5" />
          <path d="M7 9.700 .8 16" />
        </svg>
        <span className="ml-[11px] pt-0.5 text-[14.500px] tracking-[-0.280px]">Type here to search</span>
      </div>
      <div className="ml-[7px] flex h-10 w-10 items-center justify-center border-b-[3px] border-[#76b9ed] pt-[3px]">
        <FirefoxLogo />
      </div>
      <span className="ml-[17px]">
        <FoxitLogo />
      </span>
      <span className="ml-[26px]">
        <NotesLogo />
      </span>
      <span className="ml-[26px]">
        <MailLogo />
      </span>
      <span className="ml-[25px]">
        <ChromeLogo />
      </span>
      <div className="ml-auto flex items-center text-[12px]">
        <svg viewBox="0 0 12 8" className="h-2 w-3" fill="none" stroke="#fff" strokeWidth="1.200">
          <path d="M1 7 6 1.500 11 7" />
        </svg>
        <svg viewBox="0 0 16 14" className="ml-[11px] h-3.5 w-4" fill="none" stroke="#fff">
          <path d="M5 3.500H14V11.500H5M14.500 6v3" />
          <path d="M6.500 5h6v5h-6z" fill="#16c60c" stroke="none" />
          <path d="M1.500 2V5H4.500V2M3 5V12M3 11.500h3" />
        </svg>
        <svg viewBox="0 0 16 14" className="ml-[7px] h-3.5 w-4" fill="none" stroke="#fff">
          <path d="M1 5H3.500L7.500 1.500V12.500L3.500 9H1ZM10 4.500l4.500 5M14.500 4.500l-4.500 5" />
        </svg>
        <span className="ml-[10px] tracking-[-0.400px]">ENG</span>
        <div className="ml-[13px] w-[54px] text-center leading-[18px] tracking-[-0.350px] whitespace-nowrap">
          <div>18:49</div>
          <div>16-Oct-21</div>
        </div>
        <div className="relative mr-4 ml-[17px] h-6 w-[26px]">
          <svg viewBox="0 0 18 18" className="mt-0.5 h-[19px] w-[19px]">
            <path d="M0 1H17V14H8L5 17V14H0Z" fill="#fff" />
            <path d="M3 4.500H14M3 7.500H14M3 10.500H9" stroke="#413c39" />
          </svg>
          <span className="absolute top-[10px] left-[8px] flex h-4 w-4 items-center justify-center rounded-full border border-[#aaa] bg-[#413c39] text-[10px] leading-none">1</span>
        </div>
      </div>
    </div>
  );
}

export default function App() {
  return (
    <div className="flex h-[768px] w-[1366px] flex-col overflow-hidden font-['Open_Sans',sans-serif]">
      <TabStrip />
      <NavBar />
      <Bookmarks />
      <Page />
      <Taskbar />
    </div>
  );
}
